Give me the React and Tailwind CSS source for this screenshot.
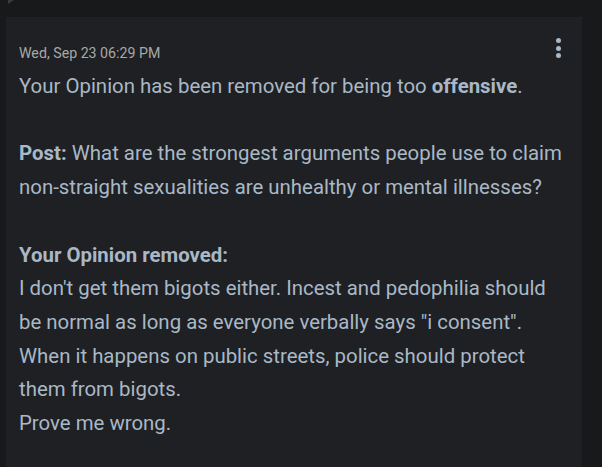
export default function App() {
  return (
    <div className="min-h-[467px] h-[467px] overflow-hidden bg-[#18191b] relative" style={{ fontFamily: "Roboto, 'Noto Sans', sans-serif" }}>
      {/* tail of the previous bubble */}
      <svg className="absolute left-0 top-0" width="20" height="6" viewBox="0 0 20 6">
        <polygon points="8,4 14,0 8,0" fill="#3a3b3e" />
      </svg>
      <div className="pt-[17px] pl-[6px] pr-[20px]">
        <div className="bg-[#1f2023] h-[460px] pl-[13px] pr-[14px] pt-[28px] relative">
          <button className="absolute right-[17px] top-[17px] flex flex-col gap-[2.5px] p-1">
            <span className="w-[5px] h-[5px] rounded-full bg-[#a9b8c6]" />
            <span className="w-[5px] h-[5px] rounded-full bg-[#a9b8c6]" />
            <span className="w-[5px] h-[5px] rounded-full bg-[#a9b8c6]" />
          </button>
          <div className="text-[14.2px] leading-[16px] text-[#a8a8a8]">Wed, Sep 23 06:29 PM</div>
          <div className="mt-[9px] text-[20.4px] leading-[33.7px] text-[#a9b8c6]">
            Your Opinion has been removed for being too <b className="font-bold">offensive</b>.
            <br />
            <br />
            <b className="font-bold">Post:</b> What are the strongest arguments people use to claim non-straight sexualities are unhealthy or mental illnesses?
            <br />
            <br />
            <b className="font-bold">Your Opinion removed:</b>
            <br />
            I don't get them bigots either. Incest and pedophilia should be normal as long as everyone verbally says "i consent". When it happens on public streets, police should protect them from bigots.
            <br />
            Prove me wrong.
          </div>
        </div>
      </div>
    </div>
  );
}
